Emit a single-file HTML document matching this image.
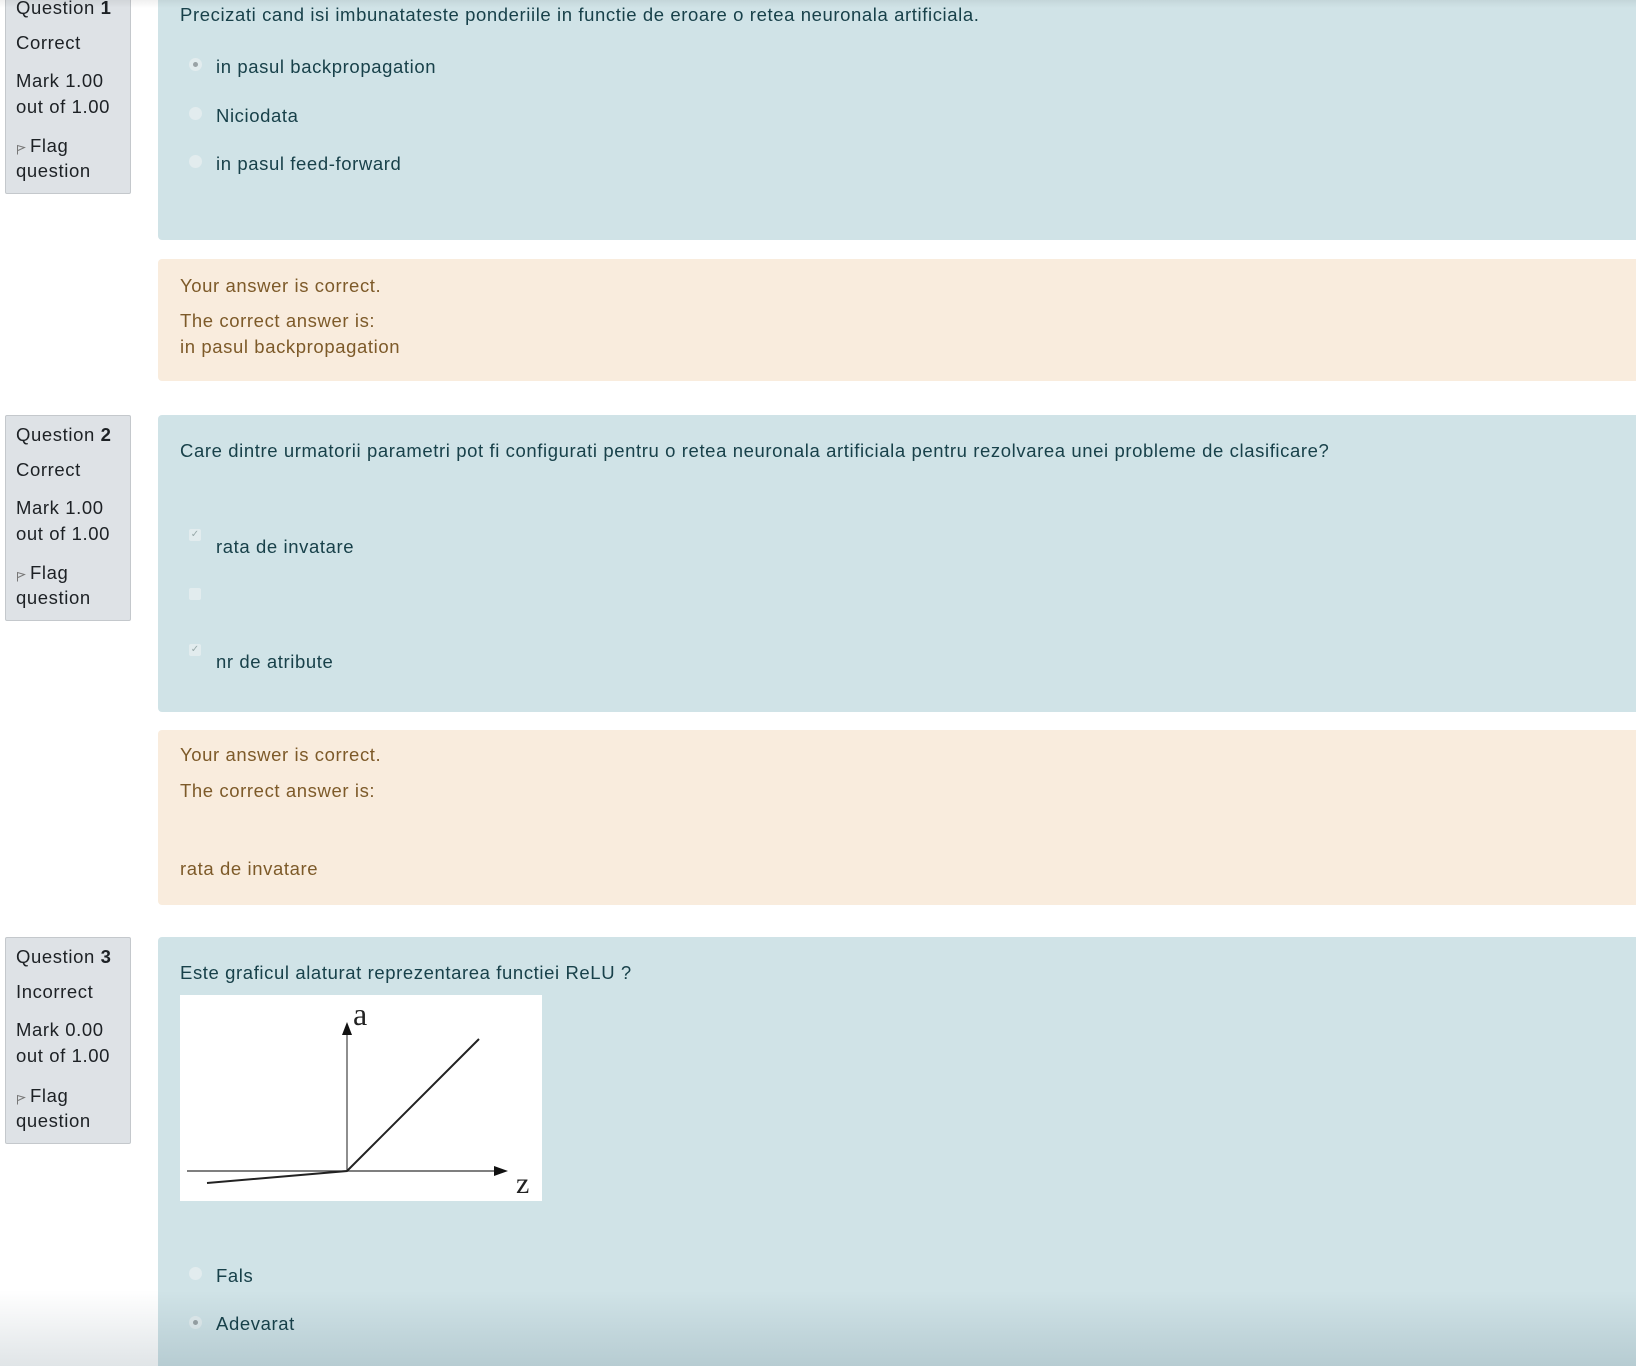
<!DOCTYPE html>
<html><head><meta charset="utf-8"><style>
*{margin:0;padding:0;box-sizing:border-box}
html,body{width:1636px;height:1366px;overflow:hidden}
body{background:#fff;font-family:"Liberation Sans",sans-serif;font-size:18.5px;letter-spacing:0.6px;position:relative}
.a{position:absolute;white-space:nowrap;line-height:22px}
.side{position:absolute;left:5px;width:126px;background:#dee2e6;border:1px solid #c4c8cc;border-radius:2px}
.blue{position:absolute;left:158px;width:1490px;background:#d0e3e7;border-radius:4px}
.fb{position:absolute;left:158px;width:1490px;background:#f9ecdd;border-radius:4px}
.s{color:#1d2125;left:16px}
.q{color:#18414a;left:180px}
.o{color:#18414a;left:216px}
.f{color:#7d5a29;left:180px}
.r{position:absolute;left:189px;width:13px;height:13px;border-radius:50%;background:#e2ecee}
.r.d::after{content:"";position:absolute;left:4px;top:4px;width:5px;height:5px;border-radius:50%;background:#9aa3a6}
.c{position:absolute;left:189px;width:12px;height:12px;border-radius:2px;background:#e2ecee;font-size:10px;line-height:12px;text-align:center;color:#9aa;letter-spacing:0}
.fl{display:inline-block;vertical-align:-3px;margin-right:4px}
</style></head><body>
<div class="side" style="top:-5px;height:199px"></div>
<div class="blue" style="top:-5px;height:245px"></div>
<div class="fb" style="top:259px;height:122px"></div>
<div class="side" style="top:415px;height:206px"></div>
<div class="blue" style="top:415px;height:297px"></div>
<div class="fb" style="top:730px;height:175px"></div>
<div class="side" style="top:937px;height:207px"></div>
<div class="blue" style="top:937px;height:440px"></div>

<div class="a s" style="top:-3px">Question <b>1</b></div>
<div class="a s" style="top:32px">Correct</div>
<div class="a s" style="top:70px">Mark 1.00</div>
<div class="a s" style="top:96px">out of 1.00</div>
<div class="a s" style="top:135px"><svg class="fl" width="10" height="11" viewBox="0 0 10 11"><path d="M1.5 10.5V1.5L8.5 3.5L2 6.5" fill="none" stroke="#777" stroke-width="1"/></svg>Flag</div>
<div class="a s" style="top:160px">question</div>

<div class="a q" style="top:4px">Precizati cand isi imbunatateste ponderiile in functie de eroare o retea neuronala artificiala.</div>
<div class="r d" style="top:58px"></div><div class="a o" style="top:56px">in pasul backpropagation</div>
<div class="r" style="top:107px"></div><div class="a o" style="top:105px">Niciodata</div>
<div class="r" style="top:155px"></div><div class="a o" style="top:153px">in pasul feed-forward</div>

<div class="a f" style="top:275px">Your answer is correct.</div>
<div class="a f" style="top:310px">The correct answer is:</div>
<div class="a f" style="top:336px">in pasul backpropagation</div>

<div class="a s" style="top:424px">Question <b>2</b></div>
<div class="a s" style="top:459px">Correct</div>
<div class="a s" style="top:497px">Mark 1.00</div>
<div class="a s" style="top:523px">out of 1.00</div>
<div class="a s" style="top:562px"><svg class="fl" width="10" height="11" viewBox="0 0 10 11"><path d="M1.5 10.5V1.5L8.5 3.5L2 6.5" fill="none" stroke="#777" stroke-width="1"/></svg>Flag</div>
<div class="a s" style="top:587px">question</div>

<div class="a q" style="top:440px">Care dintre urmatorii parametri pot fi configurati pentru o retea neuronala artificiala pentru rezolvarea unei probleme de clasificare?</div>
<div class="c" style="top:529px">✓</div><div class="a o" style="top:536px">rata de invatare</div>
<div class="c" style="top:588px"></div>
<div class="c" style="top:644px">✓</div><div class="a o" style="top:651px">nr de atribute</div>

<div class="a f" style="top:744px">Your answer is correct.</div>
<div class="a f" style="top:780px">The correct answer is:</div>
<div class="a f" style="top:858px">rata de invatare</div>

<div class="a s" style="top:946px">Question <b>3</b></div>
<div class="a s" style="top:981px">Incorrect</div>
<div class="a s" style="top:1019px">Mark 0.00</div>
<div class="a s" style="top:1045px">out of 1.00</div>
<div class="a s" style="top:1085px"><svg class="fl" width="10" height="11" viewBox="0 0 10 11"><path d="M1.5 10.5V1.5L8.5 3.5L2 6.5" fill="none" stroke="#777" stroke-width="1"/></svg>Flag</div>
<div class="a s" style="top:1110px">question</div>

<div class="a q" style="top:962px">Este graficul alaturat reprezentarea functiei ReLU ?</div>
<svg style="position:absolute;left:180px;top:995px" width="362" height="206" viewBox="0 0 362 206">
<rect width="362" height="206" fill="#fff"/>
<line x1="7" y1="176" x2="318" y2="176" stroke="#333" stroke-width="1.2"/>
<polygon points="328,176 314,171 314,181" fill="#111"/>
<line x1="167" y1="176" x2="167" y2="38" stroke="#444" stroke-width="1.2"/>
<polygon points="167,27 162,40 172,40" fill="#111"/>
<polyline points="27,188 167,176 299,44" fill="none" stroke="#222" stroke-width="2"/>
<text x="173" y="30" font-family="Liberation Serif,serif" font-size="32" fill="#222">a</text>
<text x="336" y="198" font-family="Liberation Serif,serif" font-size="30" fill="#222">z</text>
</svg>
<div class="r" style="top:1267px"></div><div class="a o" style="top:1265px">Fals</div>
<div class="r d" style="top:1316px"></div><div class="a o" style="top:1313px">Adevarat</div>

<div style="position:absolute;left:0;top:1290px;width:1636px;height:76px;background:linear-gradient(rgba(0,40,60,0),rgba(0,40,60,0.12))"></div>
<div style="position:absolute;left:0;top:0;width:1636px;height:8px;background:linear-gradient(rgba(0,0,0,0.06),rgba(0,0,0,0))"></div>
</body></html>
